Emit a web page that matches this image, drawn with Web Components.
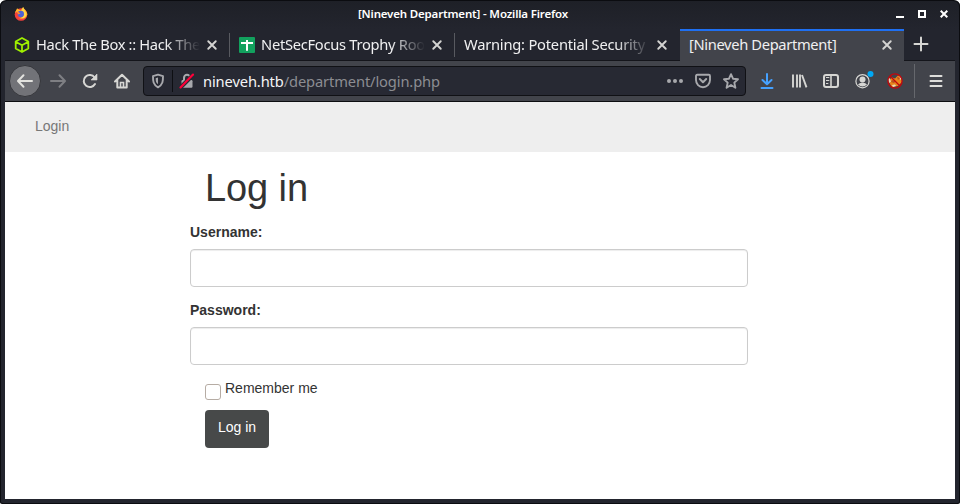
<!DOCTYPE html>
<html lang="en">
<head>
<meta charset="utf-8">
<title>[Nineveh Department]</title>
<style>
html,body{margin:0;height:100%;background:#fff;overflow:hidden}
body{font-family:"Noto Sans",sans-serif}
</style>
</head>
<body>
<browser-window>
  <title-bar slot="title">[Nineveh Department] - Mozilla Firefox</title-bar>
  <tab-strip slot="tabs">
    <browser-tab style="--w:225px;--pad:9px;--ls:-.33px"><ui-icon slot="icon" name="htb"></ui-icon>Hack The Box :: Hack The Box</browser-tab>
    <browser-tab style="--w:225px;--pad:9px;--ls:-.28px"><ui-icon slot="icon" name="sheet"></ui-icon>NetSecFocus Trophy Room</browser-tab>
    <browser-tab last style="--w:225px;--pad:9px;--ls:-.22px">Warning: Potential Security Risk</browser-tab>
    <browser-tab active style="--w:224px;--pad:9px">[Nineveh Department]</browser-tab>
  </tab-strip>
  <nav-toolbar slot="toolbar"></nav-toolbar>
  <login-page slot="page"></login-page>
</browser-window>
<script>
const ICONS = {
  firefox: [14, `<circle cx="8" cy="8.5" r="7.2" fill="#f5403c"/><path d="M1 7C2 4 3 3 3.5 1.5 5 3 6 3.3 8 4 8.5 2 9.5 1 10.5 0 11 2.5 15 4 15.2 8.5 14 13 9 15 5 12 9 13 12 11 11 7.5 10 5.5 8 5 6.500 5 4 5 2 6 1 7Z" fill="#ffb72b"/><path d="M10.500 0C11 3 14 5 14 9 13 12 10 13 8 12.500 12 11 12 6 9 4Z" fill="#ffd84a"/><circle cx="7.800" cy="8" r="3.600" fill="#4b62d8"/><path d="M2.500 5.200Q5 5 7.500 7.400 6 8 5 8.500 4 7 2.500 5.200" fill="#ff8b2b"/>`],
  htb: [16, `<g fill="none" stroke="#9fef00" stroke-width="1.800" stroke-linejoin="round"><path d="M8 1 14.300 4.500V11.500L8 15 1.700 11.500V4.500ZM1.700 4.700 8 8.200 14.300 4.700M8 8.200V14.600"/></g>`],
  sheet: [16, `<rect width="16" height="16" rx="1" fill="#12a15e"/><path d="M2 6H14M8 3V13.700" stroke="#fff" stroke-width="2"/>`],
  close: [12, `<path d="M3 3 13 13M13 3 3 13" stroke="#d4d4d2" stroke-width="2.500" stroke-linecap="round"/>`],
  plus: [16, `<path d="M8 1.500V14.500M1.500 8H14.500" stroke="#d6d6d3" stroke-width="2" stroke-linecap="round"/>`],
  back: [16, `<path d="M15 8H1.500M6.500 2.300 1 8 6.500 13.700" fill="none" stroke="#e2e2de" stroke-width="2" stroke-linecap="round" stroke-linejoin="round"/>`],
  forward: [16, `<path d="M1 8H14.500M9.500 2.300 15 8 9.500 13.700" fill="none" stroke="#7e7f83" stroke-width="2" stroke-linecap="round" stroke-linejoin="round"/>`],
  reload: [16, `<path d="M13 11A6 6 0 1 1 12.600 4.500" fill="none" stroke="#d6d6d3" stroke-width="2" stroke-linecap="round"/><path d="M15 1V7H9Z" fill="#d6d6d3" stroke="#d6d6d3" stroke-width=".6" stroke-linejoin="round"/>`],
  home: [16, `<path d="M1 8.500 8 1.700 15 8.500M3.300 7.500V14.500H12.700V7.500" fill="none" stroke="#d6d6d3" stroke-width="2" stroke-linecap="round" stroke-linejoin="round"/><path d="M6.500 14.500V9.500H9.500V14.500" fill="none" stroke="#d6d6d3" stroke-width="1.600"/>`],
  shield: [16, `<path d="M8 1.700 13 3.200C13 8 13 11.500 8 14.300 3 11.500 3 8 3 3.200Z" fill="none" stroke="#a7a8ac" stroke-width="1.900" stroke-linejoin="round"/><path d="M8 4.500V11.300C5.700 9.700 5.700 8 5.700 5.200Z" fill="#a7a8ac"/>`],
  lock: [16, `<path d="M5 7V5A3 3.200 0 0 1 11 5V7" fill="none" stroke="#a7a8ac" stroke-width="2"/><rect x="2.500" y="7" width="11" height="7.800" rx="1.200" fill="#a7a8ac"/><path d="M.5 15.500 14 2" stroke="#272933" stroke-width="4"/><path d="M1.500 14.500 14 1.500" stroke="#ff0039" stroke-width="2.100" stroke-linecap="round"/>`],
  dots: [16, `<g fill="#a7a8ac"><circle cx="2" cy="8" r="2"/><circle cx="8" cy="8" r="2"/><circle cx="14" cy="8" r="2"/></g>`],
  pocket: [16, `<path d="M2.200 1.800H13.800Q15 1.800 15 3V7A7 7.200 0 0 1 1 7V3Q1 1.800 2.200 1.800Z" fill="none" stroke="#a7a8ac" stroke-width="1.900"/><path d="M4.800 6 8 9.200 11.200 6" fill="none" stroke="#a7a8ac" stroke-width="2" stroke-linecap="round" stroke-linejoin="round"/>`],
  star: [16, `<path d="M8 1.200 10 5.700 15 6.200 11.300 9.600 12.400 14.700 8 12 3.600 14.700 4.700 9.600 1 6.200 6 5.700Z" fill="none" stroke="#a7a8ac" stroke-width="1.900" stroke-linejoin="round"/>`],
  download: [16, `<path d="M8 1V11M3.500 7 8 11.300 12.500 7M2.500 15H13.500" fill="none" stroke="#45a1ff" stroke-width="2" stroke-linecap="round" stroke-linejoin="round"/>`],
  library: [16, `<path d="M2 1.500V14.500M6 1.500V14.500M9 1.500V14.500M11 2 15.500 14.300" fill="none" stroke="#d6d6d3" stroke-width="1.900"/>`],
  sidebar: [16, `<rect x="1" y="2" width="14" height="12" rx="2" fill="none" stroke="#d6d6d3" stroke-width="2"/><path d="M8 2V14" stroke="#d6d6d3" stroke-width="1.600"/><path d="M3 4.500H6.300M3 7.500H6.300M3 10.500H5.300" stroke="#d6d6d3" stroke-width="1"/>`],
  account: [16, `<circle cx="7.500" cy="8.200" r="6.600" fill="none" stroke="#d6d6d3" stroke-width="1.200"/><circle cx="7.500" cy="6.500" r="3" fill="#d6d6d3"/><path d="M3 11.500Q5 9.300 7.500 9.800 10 9.300 12 11.500 7.500 15.500 3 11.500" fill="#d6d6d3"/><circle cx="15.500" cy="1" r="3" fill="#00a8f5"/>`],
  fox: [16, `<path d="M2 7 5 4.500 8 5.500 11 2.500 14 3.500 15 9 11 13 5 14 3 11Z" fill="#e9841c"/><path d="M1 5 2.500 5 4 8.500 2 10ZM12.500 3 14 4 14 7 13 6ZM5 12 8 11.500 9 13 6 14Z" fill="#ead9bd"/><path d="M5 7 9 8 7 10 4 9ZM10 4 13 5 11 7Z" fill="#b7511c"/><circle cx="8" cy="8" r="7.100" fill="none" stroke="#c4070c" stroke-width="1.300"/><path d="M3 3 13 13" stroke="#c4070c" stroke-width="1.300"/>`],
  menu: [16, `<path d="M2.500 3H13.500M2.500 8H13.500M2.500 13H13.500" stroke="#dededb" stroke-width="2" stroke-linecap="round"/>`]
};
function define(name, html, setup) {
  const t = document.createElement('template');
  t.innerHTML = html;
  customElements.define(name, class extends HTMLElement {
    constructor() {
      super();
      this.attachShadow({mode: 'open'}).append(t.content.cloneNode(true));
    }
    connectedCallback() { if (setup) setup(this); }
  });
}
define('ui-icon', `<style>:host{display:flex;flex:none}svg{display:block;overflow:visible}</style><svg viewBox="0 0 16 16"></svg>`, el => {
  const [size, art] = ICONS[el.getAttribute('name')];
  const svg = el.shadowRoot.querySelector('svg');
  svg.setAttribute('width', size);
  svg.setAttribute('height', size);
  svg.innerHTML = art;
});
define('title-bar', `<style>
:host{display:grid;grid-template-columns:83px 1fr 117px;align-items:center;height:28px;box-sizing:border-box;padding-bottom:2px;color:#fff;font:600 11.5px/26px "Noto Sans",sans-serif}
.left{padding-left:14px}.name{text-align:center;white-space:nowrap;letter-spacing:-.17px}
.ctl{display:flex;justify-content:flex-end;gap:14px;padding-right:12px}svg{display:block}
</style><div class="left"><ui-icon name="firefox"></ui-icon></div><div class="name"><slot></slot></div>
<div class="ctl"><svg width="8" height="8"><path d="M0 7H8" stroke="#fff" stroke-width="2"/></svg><svg width="8" height="8"><path d="M1 1H7V7H1Z" fill="none" stroke="#fff" stroke-width="2"/></svg><svg width="8" height="8"><path d="M.7.7 7.300 7.300M7.300.7.7 7.300" stroke="#fff" stroke-width="2"/></svg></div>`);
define('tab-strip', `<style>:host{display:flex;height:32px;margin:0 5px}.new{display:flex;align-items:center;box-sizing:border-box;padding:0 0 2px 9px;flex:1;box-shadow:inset 0 -1px #14151b}</style><slot></slot><div class="new"><ui-icon name="plus"></ui-icon></div>`);
define('browser-tab', `<style>
:host{display:flex;align-items:center;box-sizing:border-box;width:var(--w);height:32px;padding:0 12px 1px var(--pad);gap:6px;color:#f0f0f1;font:14.7px/30px "Noto Sans",sans-serif;position:relative;box-shadow:inset 0 -1px #14151b}
:host([active]){background:#42444b;box-shadow:inset 0 2px #1f70f2;padding-right:11px}
.label{flex:1;min-width:0;overflow:hidden;white-space:nowrap;letter-spacing:var(--ls,-.35px);margin-top:-1px;-webkit-mask-image:linear-gradient(to right,#000 calc(100% - 34px),transparent)}
:host([active]) .label{-webkit-mask-image:none}
:host(:not([active]):not([last]))::after{content:"";position:absolute;right:0;top:4px;width:1px;height:24px;background:#585a60}
</style><slot name="icon"></slot><div class="label"><slot></slot></div><ui-icon name="close"></ui-icon>`);
define('address-bar', `<style>
:host{display:flex;align-items:center;box-sizing:border-box;flex:1;height:30px;border:1px solid #101115;border-radius:4px;background:#272933;padding:0 6px;color:#8c8d92;font:14.7px/28px "Noto Sans",sans-serif;letter-spacing:-.13px}
.sep{width:1px;height:22px;background:#0e0f13;margin:0 6px}.url{flex:1;padding-left:8px}b{font-weight:400;color:#f5f5f6}.acts{display:flex;gap:12px}
</style><ui-icon name="shield"></ui-icon><i class="sep"></i><ui-icon name="lock"></ui-icon><div class="url"><b>nineveh.htb</b>/department/login.php</div><div class="acts"><ui-icon name="dots"></ui-icon><ui-icon name="pocket"></ui-icon><ui-icon name="star"></ui-icon></div>`);
define('tool-button', `<style>:host{display:grid;place-items:center;flex:none;box-sizing:border-box;width:32px;height:32px}:host([round]){border:1px solid #35363b;border-radius:50%;background:#727378}</style><slot></slot>`);
define('nav-toolbar', `<style>
:host{display:flex;align-items:center;height:40px;margin:0 5px;padding:0 3px 0 4px;background:#42444b}
address-bar{margin:0 5px}.fwd{margin-left:1px}.sep{width:1px;height:34px;background:#66686d;margin:0 5px 0 3px}
</style>
<tool-button round><ui-icon name="back"></ui-icon></tool-button><tool-button class="fwd"><ui-icon name="forward"></ui-icon></tool-button><tool-button><ui-icon name="reload"></ui-icon></tool-button><tool-button><ui-icon name="home"></ui-icon></tool-button>
<address-bar></address-bar>
<tool-button><ui-icon name="download"></ui-icon></tool-button><tool-button><ui-icon name="library"></ui-icon></tool-button><tool-button><ui-icon name="sidebar"></ui-icon></tool-button><tool-button><ui-icon name="account"></ui-icon></tool-button><tool-button><ui-icon name="fox"></ui-icon></tool-button><i class="sep"></i><tool-button><ui-icon name="menu"></ui-icon></tool-button>`);
define('form-field', `<style>:host{display:block;margin-bottom:13px}label{display:block;font-weight:700;line-height:20px;margin-bottom:7px}input{display:block;box-sizing:border-box;width:100%;height:38px;border:1px solid #ccc;border-radius:4px;background:#fff;box-shadow:inset 0 1px 1px rgba(0,0,0,.075);padding:8px 12px}</style><label><slot></slot></label><input>`);
define('login-page', `<style>
:host{display:block;flex:1;margin:0 5px;background:#fff;color:#333;font:14px/20px "Liberation Sans",Arial,sans-serif}
nav{height:50px;box-sizing:border-box;padding:14px 30px;background:#eee;color:#777}
form{width:558px;margin:0 0 0 185px}
h1{font:400 38px/43px "Liberation Sans",Arial,sans-serif;letter-spacing:-.1px;margin:0 0 12px;padding:15px 0 0 15px}
.remember{display:flex;align-items:flex-start;gap:4px;padding-left:15px}
.box{appearance:none;box-sizing:border-box;width:16px;height:16px;border:1px solid #b6aca4;border-radius:3px;margin:6px 0 0;background:#fff}
button{display:block;margin:10px 0 0 15px;width:64px;height:38px;border:0;border-radius:4px;background:#474949;color:#fff;font:14px/20px "Liberation Sans",Arial,sans-serif;padding:0 0 4px}
</style><nav>Login</nav><form><h1>Log in</h1><form-field>Username:</form-field><form-field>Password:</form-field><label class="remember"><input class="box" type="checkbox"><span>Remember me</span></label><button type="button">Log in</button></form>`);
define('browser-window', `<style>
:host{display:flex;flex-direction:column;box-sizing:border-box;width:960px;height:504px;border:1px solid #0b0c10;border-width:1px 0 1px;border-radius:6px 6px 2px 2px;box-shadow:inset 1px 0 #0b0c10,inset -1px 0 #0b0c10;background:linear-gradient(#1e2027,#23252e 28px);padding-bottom:4px;overflow:hidden}
.rule{height:1px;background:#0c0d10;margin:0 5px}
</style><slot name="title"></slot><slot name="tabs"></slot><slot name="toolbar"></slot><div class="rule"></div><slot name="page"></slot>`);
</script>
</body>
</html>
